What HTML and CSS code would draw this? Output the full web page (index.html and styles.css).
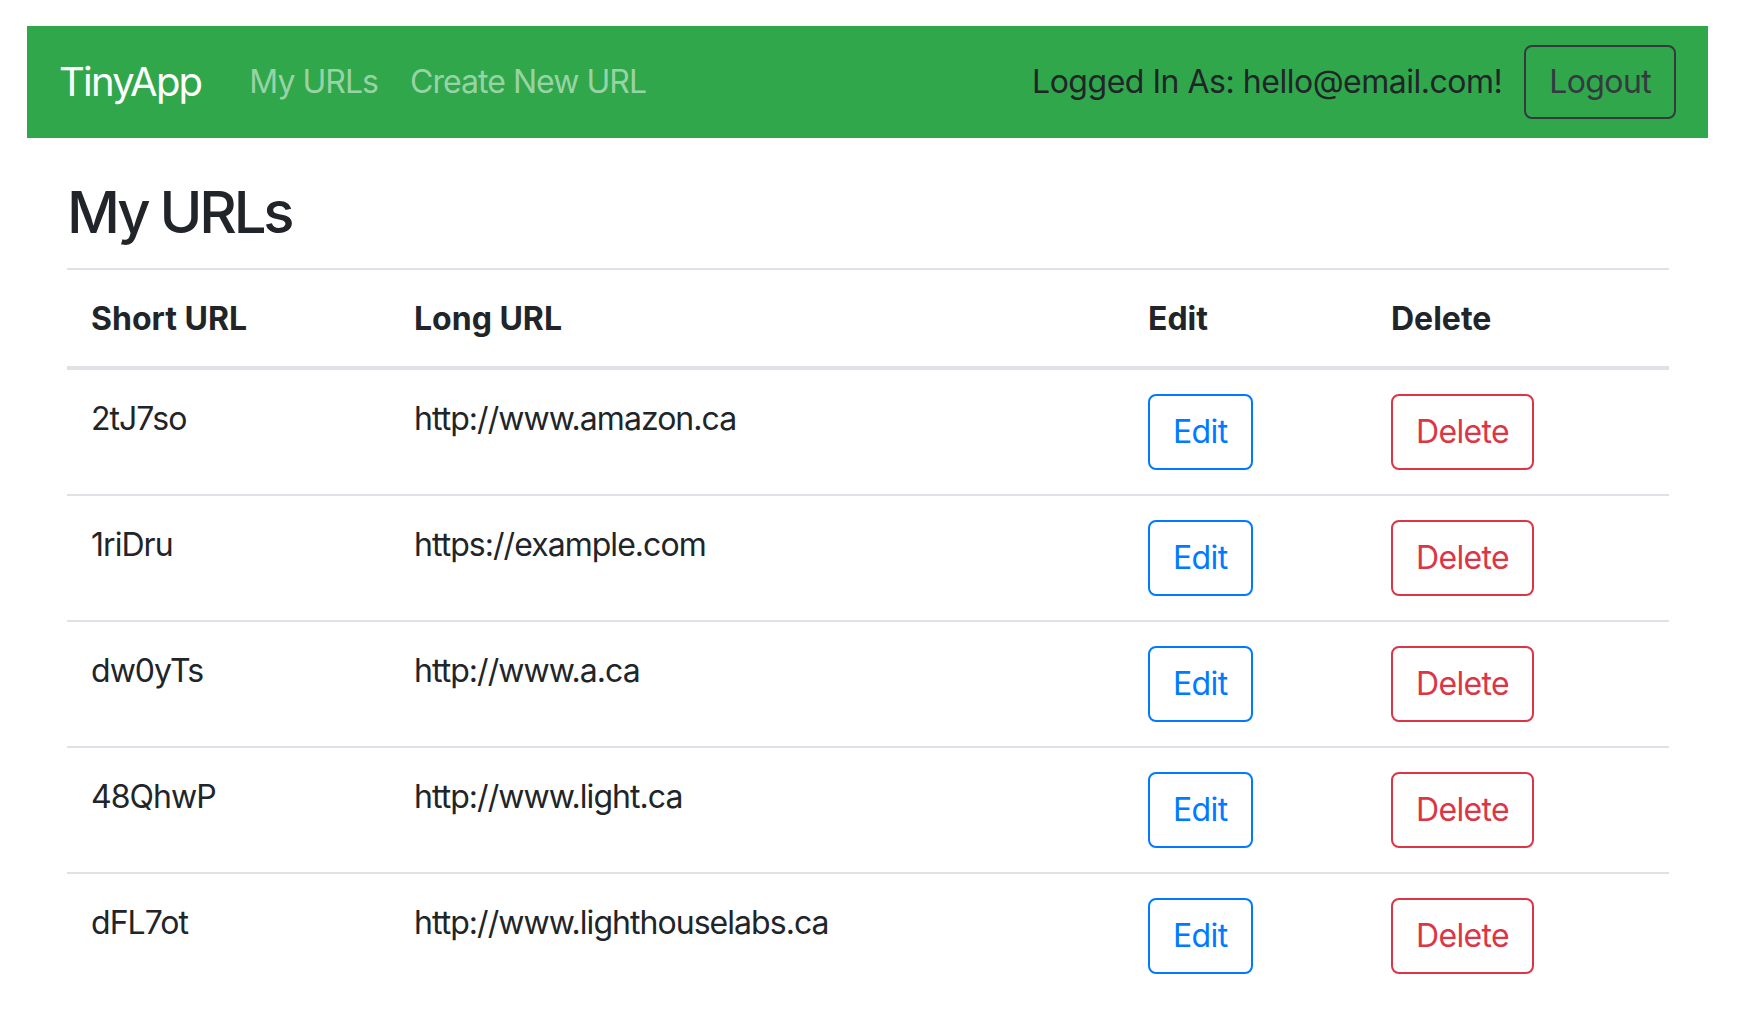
FILE: index.html
```html
<!DOCTYPE html>
<html lang="en">
<head>
<meta charset="utf-8">
<title>TinyApp</title>
<link rel="stylesheet" href="styles.css">
</head>
<body>
<div class="page">
  <nav class="navbar">
    <div class="nav-left">
      <a class="brand" href="#">TinyApp</a>
      <a class="nav-link" href="#">My URLs</a>
      <a class="nav-link" href="#">Create New URL</a>
    </div>
    <div class="nav-right">
      <span class="user">Logged In As: hello@email.com!</span>
      <button class="btn btn-dark">Logout</button>
    </div>
  </nav>
  <main class="container">
    <h2 class="title">My URLs</h2>
    <table class="table">
      <thead>
        <tr>
          <th class="c1">Short URL</th>
          <th class="c2">Long URL</th>
          <th class="c3">Edit</th>
          <th class="c4">Delete</th>
        </tr>
      </thead>
      <tbody>
        <tr><td>2tJ7so</td><td>http://www.amazon.ca</td><td><button class="btn btn-blue">Edit</button></td><td><button class="btn btn-red">Delete</button></td></tr>
        <tr><td>1riDru</td><td>https://example.com</td><td><button class="btn btn-blue">Edit</button></td><td><button class="btn btn-red">Delete</button></td></tr>
        <tr><td>dw0yTs</td><td>http://www.a.ca</td><td><button class="btn btn-blue">Edit</button></td><td><button class="btn btn-red">Delete</button></td></tr>
        <tr><td>48QhwP</td><td>http://www.light.ca</td><td><button class="btn btn-blue">Edit</button></td><td><button class="btn btn-red">Delete</button></td></tr>
        <tr><td>dFL7ot</td><td>http://www.lighthouselabs.ca</td><td><button class="btn btn-blue">Edit</button></td><td><button class="btn btn-red">Delete</button></td></tr>
      </tbody>
    </table>
  </main>
</div>
</body>
</html>
```
FILE: styles.css
```css
* { box-sizing: border-box; }
html, body { margin: 0; padding: 0; background: #fff; }
body {
  font-family: Inter, "Liberation Sans", sans-serif;
  color: #212529;
  font-size: 32px;
  line-height: 48px;
  letter-spacing: -0.03em;
}
.page {
  padding: 26px 30px 0 27px;
}
.navbar {
  background: #30a74b;
  height: 112px;
  padding: 0 32px;
  display: flex;
  align-items: center;
  justify-content: space-between;
}
.nav-left, .nav-right {
  display: flex;
  align-items: center;
}
.brand {
  color: #fff;
  font-size: 40px;
  letter-spacing: -0.045em;
  text-decoration: none;
  margin-right: 32px;
}
.nav-link {
  color: #98d3a5;
  text-decoration: none;
  padding: 0 16px;
}
.user {
  color: #212529;
  letter-spacing: -0.015em;
  margin-right: 22px;
}
.btn {
  font-family: inherit;
  font-size: 32px;
  line-height: 48px;
  letter-spacing: -0.02em;
  background: transparent;
  border: 2px solid;
  border-radius: 8px;
  padding: 12px 23px;
  cursor: pointer;
}
.btn-dark { color: #343a40; border-color: #343a40; padding: 11px 23px; }
.btn-blue { color: #007bff; border-color: #007bff; }
.btn-red { color: #dc3545; border-color: #dc3545; }
.container {
  margin: 0 39px 0 40px;
  padding-top: 39px;
}
.title {
  font-size: 58px;
  font-weight: 500;
  letter-spacing: -0.055em;
  line-height: 70px;
  margin: 0 0 21px;
}
.table {
  width: 100%;
  border-collapse: collapse;
  border-top: 2px solid #dee2e6;
}
.table th, .table td {
  text-align: left;
  vertical-align: top;
  padding: 24px;
}
.table th {
  font-weight: 700;
  letter-spacing: 0;
  padding: 25px 24px 23px;
  border-bottom: 4px solid #dee2e6;
}
.table td {
  padding: 25px 24px 23px;
}
.table tbody tr + tr td {
  border-top: 2px solid #dee2e6;
}
.table td:nth-child(3), .table td:nth-child(4) {
  padding: 24px;
}
.c1 { width: 323px; }
.c2 { width: 734px; }
.c3 { width: 243px; }
```
